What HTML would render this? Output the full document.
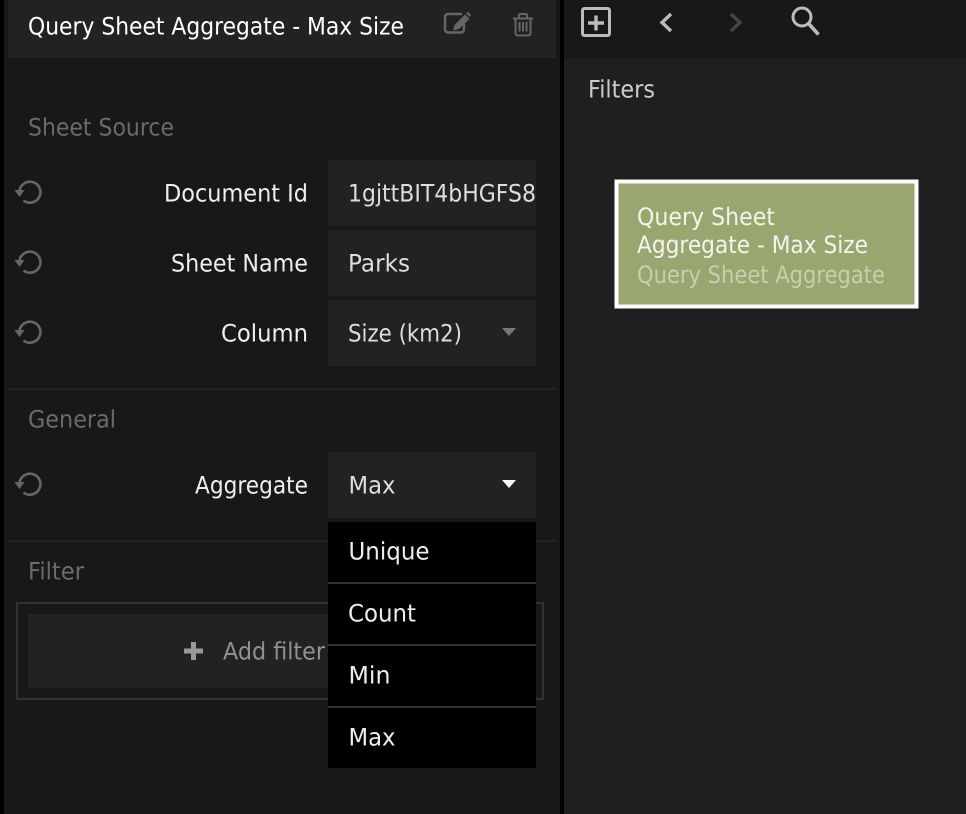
<!DOCTYPE html>
<html><head><meta charset="utf-8"><style>
html,body{margin:0;padding:0;background:#000;width:966px;height:814px;overflow:hidden}
svg{display:block}
text{font-family:"DejaVu Sans","Liberation Sans",sans-serif;font-size:24px;text-rendering:geometricPrecision}
</style></head><body>
<svg width="966" height="814" viewBox="0 0 966 814" xmlns="http://www.w3.org/2000/svg">
<defs><clipPath id="c"><rect x="328" y="160" width="208" height="66"/></clipPath></defs>
<rect width="966" height="814" fill="#000"/>
<rect x="4" y="0" width="556" height="814" fill="#181818"/>
<rect x="8" y="0" width="548" height="58" fill="#222"/>
<rect x="564" y="0" width="402" height="58" fill="#181818"/>
<rect x="564" y="58" width="402" height="756" fill="#1f1f1f"/>

<text x="28" y="34.500" textLength="376" lengthAdjust="spacingAndGlyphs" fill="#fff">Query Sheet Aggregate - Max Size</text>
<!-- edit icon -->
<g fill="none" stroke="#666" stroke-width="2.4">
<path d="M462 14H448.500Q445 14 445 17.500V29Q445 32.500 448.500 32.500H460.500Q464 32.500 464 29V24"/>
</g>
<path d="M453 30.500L454.500 25L465 14.500L469.500 19L459 29Z" fill="#666"/>
<path d="M466.200 13.300L468 11.800L471 15L469.300 17Z" fill="#666"/>
<!-- trash icon -->
<g fill="none" stroke="#666" stroke-width="2">
<path d="M513 18.500H533"/>
<path d="M519 18V15.500Q519 14 520.500 14H525.500Q527 14 527 15.500V18"/>
<path d="M515.500 18.500V33Q515.500 35.500 518 35.500H528Q530.500 35.500 530.500 33V18.500"/>
<path d="M519.500 22V31.500M523 22V31.500M526.500 22V31.500"/>
</g>

<!-- top right icons -->
<rect x="582.500" y="8.500" width="27" height="27" rx="2" fill="none" stroke="#bbb" stroke-width="3"/>
<path d="M596 15.500V30.500M588 23H604" stroke="#bbb" stroke-width="3.400" fill="none"/>
<path d="M671 14L662 22.500L671 31" stroke="#bbb" stroke-width="3.400" fill="none"/>
<path d="M731 14L740 22.500L731 31" stroke="#444" stroke-width="3.400" fill="none"/>
<circle cx="802" cy="17" r="9" fill="none" stroke="#bbb" stroke-width="3"/>
<path d="M808.500 23.500L818.500 34.500" stroke="#bbb" stroke-width="3.600" fill="none"/>

<text x="588" y="97.500" textLength="67" lengthAdjust="spacingAndGlyphs" fill="#ccc">Filters</text>

<!-- card -->
<rect x="614.500" y="179.500" width="304" height="129" fill="#fff"/>
<rect x="618.500" y="183.500" width="296" height="121" fill="#9aa66f"/>
<text x="637" y="225" textLength="138" lengthAdjust="spacingAndGlyphs" fill="#f3f5ec">Query Sheet</text>
<text x="637" y="253" textLength="231" lengthAdjust="spacingAndGlyphs" fill="#f3f5ec">Aggregate - Max Size</text>
<text x="637" y="283" textLength="248" lengthAdjust="spacingAndGlyphs" fill="#c7cfac">Query Sheet Aggregate</text>

<!-- section labels -->
<text x="28" y="135.500" textLength="146" lengthAdjust="spacingAndGlyphs" fill="#6a6a6a">Sheet Source</text>
<text x="28" y="427.500" textLength="88" lengthAdjust="spacingAndGlyphs" fill="#6a6a6a">General</text>
<text x="28" y="579.500" textLength="56" lengthAdjust="spacingAndGlyphs" fill="#6a6a6a">Filter</text>

<!-- dividers -->
<rect x="8" y="388" width="548" height="2" fill="#222"/>
<rect x="8" y="540" width="548" height="2" fill="#222"/>

<!-- rows -->
<rect x="328" y="160" width="208" height="66" fill="#222"/>
<rect x="328" y="230" width="208" height="66" fill="#222"/>
<rect x="328" y="300" width="208" height="66" fill="#222"/>
<rect x="328" y="452" width="208" height="66" fill="#222"/>

<text x="164" y="201.500" textLength="144" lengthAdjust="spacingAndGlyphs" fill="#eee">Document Id</text>
<text x="171" y="271.500" textLength="137" lengthAdjust="spacingAndGlyphs" fill="#eee">Sheet Name</text>
<text x="221" y="341.500" textLength="87" lengthAdjust="spacingAndGlyphs" fill="#eee">Column</text>
<text x="195" y="493.500" textLength="113" lengthAdjust="spacingAndGlyphs" fill="#eee">Aggregate</text>

<text x="348" y="201.500" textLength="188" lengthAdjust="spacingAndGlyphs" fill="#ddd" clip-path="url(#c)">1gjttBIT4bHGFS8</text>
<text x="348" y="271.500" textLength="62" lengthAdjust="spacingAndGlyphs" fill="#ddd">Parks</text>
<text x="348" y="341.500" textLength="114" lengthAdjust="spacingAndGlyphs" fill="#ddd">Size (km2)</text>
<text x="348.500" y="493.500" textLength="47" lengthAdjust="spacingAndGlyphs" fill="#ddd">Max</text>

<path d="M502 328H516L509 336Z" fill="#777"/>
<path d="M502 480H516L509 488Z" fill="#fff"/>

<!-- reset icons -->
<g transform="translate(-0.500 -1)"><path d="M20 192A10.500 10.500 0 1 1 24 201.500" stroke="#666" stroke-width="2.600" fill="none"/><path d="M15 191H25L20 198Z" fill="#666"/></g>
<g transform="translate(-0.500 69)"><path d="M20 192A10.500 10.500 0 1 1 24 201.500" stroke="#666" stroke-width="2.600" fill="none"/><path d="M15 191H25L20 198Z" fill="#666"/></g>
<g transform="translate(-0.500 139)"><path d="M20 192A10.500 10.500 0 1 1 24 201.500" stroke="#666" stroke-width="2.600" fill="none"/><path d="M15 191H25L20 198Z" fill="#666"/></g>
<g transform="translate(-0.500 291)"><path d="M20 192A10.500 10.500 0 1 1 24 201.500" stroke="#666" stroke-width="2.600" fill="none"/><path d="M15 191H25L20 198Z" fill="#666"/></g>

<!-- filter box -->
<rect x="17" y="603" width="526" height="96" fill="none" stroke="#333" stroke-width="2"/>
<rect x="28" y="614" width="504" height="74" fill="#222"/>
<path d="M193.500 642V660M184 651H203" stroke="#999" stroke-width="5" fill="none"/>
<text x="223" y="659.500" textLength="102" lengthAdjust="spacingAndGlyphs" fill="#909090">Add filter</text>

<!-- dropdown -->
<rect x="328" y="522" width="208" height="246" fill="#000"/>
<rect x="328" y="582" width="208" height="2" fill="#333"/>
<rect x="328" y="644" width="208" height="2" fill="#333"/>
<rect x="328" y="706" width="208" height="2" fill="#333"/>
<text x="348.500" y="559.500" textLength="81" lengthAdjust="spacingAndGlyphs" fill="#eee">Unique</text>
<text x="348" y="621.500" textLength="68" lengthAdjust="spacingAndGlyphs" fill="#eee">Count</text>
<text x="348.500" y="683.500" textLength="42" lengthAdjust="spacingAndGlyphs" fill="#eee">Min</text>
<text x="348.500" y="745.500" textLength="47" lengthAdjust="spacingAndGlyphs" fill="#eee">Max</text>
</svg>
</body></html>
